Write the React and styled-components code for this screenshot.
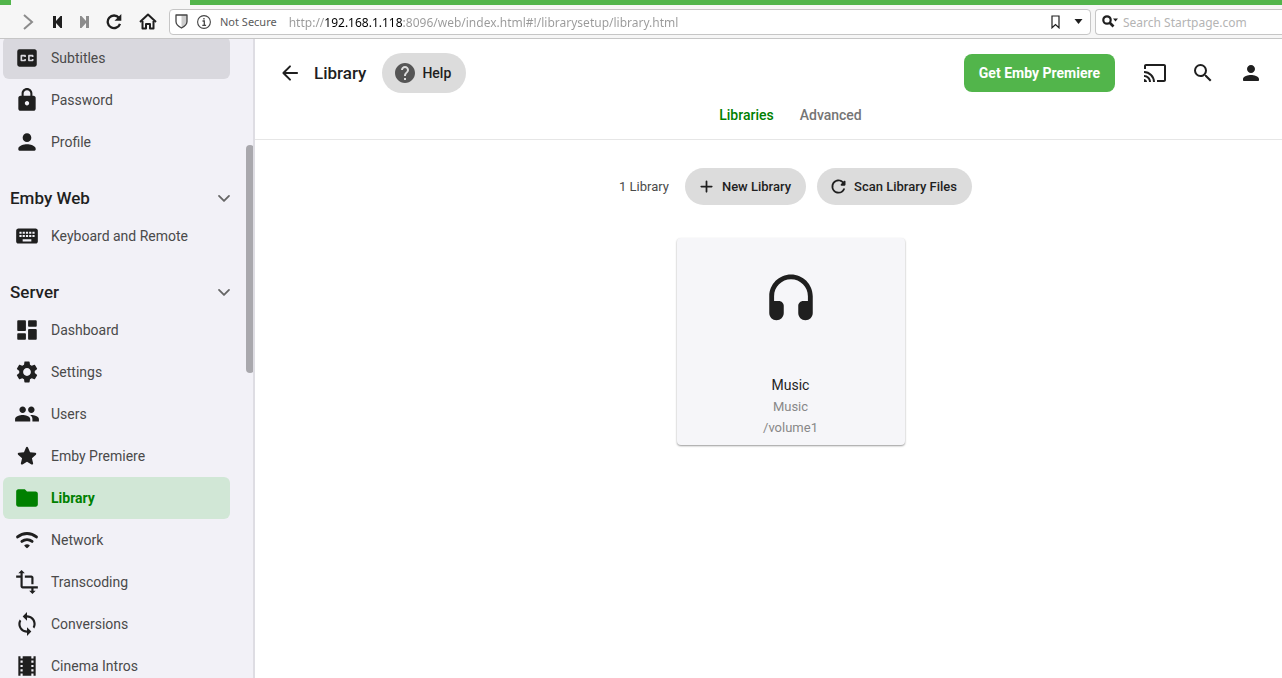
import React from 'react'
import styled, { createGlobalStyle } from 'styled-components'
import {
  MdCast,
  MdClosedCaption,
  MdFolder,
  MdHelp,
  MdKeyboard,
  MdLock,
  MdPeople,
  MdSearch,
  MdSettings,
  MdLoop,
  MdTheaters,
  MdTransform
} from 'react-icons/md'

const GlobalStyle = createGlobalStyle`
  :root {
    --mainFF: Roboto, 'Liberation Sans', sans-serif;
    --chromeFF: 'Noto Sans', 'Open Sans', sans-serif;
    --green: #52b54b;
    --activeGreen: #008000;
    --ink: #1f1f1f;
  }
  * {
    box-sizing: border-box;
  }
  body {
    margin: 0;
    background: #fff;
    color: var(--ink);
    font-family: var(--mainFF);
  }
  button, input {
    font-family: inherit;
    margin: 0;
  }
  ul {
    list-style: none;
    margin: 0;
    padding: 0;
  }
`

/* icons */

const Svg = ({ size = 24, children, ...rest }) => (
  <svg width={size} height={size} viewBox="0 0 24 24" fill="currentColor" aria-hidden="true" {...rest}>
    {children}
  </svg>
)

const BackIcon = () => (
  <Svg>
    <path d="M19 11H7.83l4.88-4.88c.39-.39.39-1.03 0-1.42a.996.996 0 0 0-1.41 0l-6.59 6.59a.996.996 0 0 0 0 1.41l6.59 6.59a.996.996 0 1 0 1.41-1.41L7.83 13H19c.55 0 1-.45 1-1s-.45-1-1-1z" />
  </Svg>
)

const DashboardIcon = ({ size }) => (
  <Svg size={size}>
    <path d="M4 13h6c.55 0 1-.45 1-1V4c0-.55-.45-1-1-1H4c-.55 0-1 .45-1 1v8c0 .55.45 1 1 1zm0 8h6c.55 0 1-.45 1-1v-4c0-.55-.45-1-1-1H4c-.55 0-1 .45-1 1v4c0 .55.45 1 1 1zm10 0h6c.55 0 1-.45 1-1v-8c0-.55-.45-1-1-1h-6c-.55 0-1 .45-1 1v8c0 .55.45 1 1 1zM13 4v4c0 .55.45 1 1 1h6c.55 0 1-.45 1-1V4c0-.55-.45-1-1-1h-6c-.55 0-1 .45-1 1z" />
  </Svg>
)

const PersonIcon = ({ size }) => (
  <Svg size={size}>
    <path d="M12 12c2.21 0 4-1.79 4-4s-1.79-4-4-4-4 1.79-4 4 1.79 4 4 4zm0 2c-2.67 0-8 1.34-8 4v1c0 .55.45 1 1 1h14c.55 0 1-.45 1-1v-1c0-2.66-5.33-4-8-4z" />
  </Svg>
)

const StarIcon = ({ size }) => (
  <Svg size={size}>
    <path d="M12 17.27l4.15 2.51c.76.46 1.69-.22 1.49-1.08l-1.1-4.72 3.67-3.18c.67-.58.31-1.68-.57-1.75l-4.83-.41-1.89-4.46c-.34-.81-1.5-.81-1.84 0L9.19 8.63l-4.83.41c-.88.07-1.24 1.17-.57 1.75l3.67 3.18-1.1 4.72c-.2.86.73 1.54 1.49 1.08l4.15-2.5z" />
  </Svg>
)

const WifiIcon = ({ size }) => (
  <Svg size={size}>
    <g fill="none" stroke="currentColor" strokeWidth="2.7" strokeLinecap="round">
      <path d="M3.300 9.200c5-4.300 12.400-4.300 17.400 0" />
      <path d="M7.300 13.300c2.800-2.200 6.600-2.200 9.400 0" />
    </g>
    <path d="M9.800 16.500c1.400-.8 3-.8 4.400 0 .4.300.4.700.1 1l-1.600 1.700c-.4.4-1 .4-1.400 0l-1.600-1.700c-.3-.3-.3-.7.1-1z" />
  </Svg>
)

const AddIcon = () => (
  <Svg size={21}>
    <path d="M18 13h-5v5c0 .55-.45 1-1 1s-1-.45-1-1v-5H6c-.55 0-1-.45-1-1s.45-1 1-1h5V6c0-.55.45-1 1-1s1 .45 1 1v5h5c.55 0 1 .45 1 1s-.45 1-1 1z" />
  </Svg>
)

const refreshPath =
  'M17.65 6.35a7.95 7.95 0 0 0-6.48-2.31c-3.67.37-6.69 3.35-7.1 7.02C3.52 15.91 7.27 20 12 20a7.98 7.98 0 0 0 7.21-4.56c.32-.67-.16-1.44-.9-1.44-.37 0-.72.2-.88.53a5.994 5.994 0 0 1-6.8 3.31c-2.22-.49-4.01-2.3-4.48-4.52A6.002 6.002 0 0 1 12 6c1.66 0 3.14.69 4.22 1.78l-1.51 1.51c-.63.63-.19 1.71.7 1.71H19c.55 0 1-.45 1-1V6.41c0-.89-1.08-1.34-1.71-.71l-.64.65z'

const RefreshIcon = () => (
  <Svg size={21}>
    <path d={refreshPath} />
  </Svg>
)

const ChevronIcon = () => (
  <Svg size={20} fill="none" stroke="#666" strokeWidth="2.2" strokeLinecap="round" strokeLinejoin="round">
    <path d="M6 9.500l6 6 6-6" />
  </Svg>
)

const HeadsetIcon = () => (
  <Svg size={58}>
    <path d="M12 1c-4.970 0-9 4.030-9 9v7c0 1.660 1.340 3 3 3s3-1.340 3-3v-3c0-1.100-.9-2-2-2H5v-2c0-3.870 3.130-7 7-7s7 3.130 7 7v2h-2c-1.100 0-2 .9-2 2v3c0 1.660 1.340 3 3 3s3-1.340 3-3v-7c0-4.970-4.030-9-9-9z" />
  </Svg>
)

const ForwardIcon = () => (
  <svg width="12" height="18" viewBox="0 0 12 18" fill="none" stroke="#8c8c8c" strokeWidth="2" aria-hidden="true">
    <path d="M2 2l8 7-8 7" />
  </svg>
)

const RewindIcon = () => (
  <svg width="10" height="12" viewBox="0 0 10 12" fill="currentColor" aria-hidden="true">
    <path d="M0 0h3v5l4.500-5H9v12H7.500L3 7v5H0z" />
  </svg>
)

const FastForwardIcon = () => (
  <svg width="10" height="12" viewBox="0 0 10 12" fill="#8c8c8c" aria-hidden="true">
    <path d="M9 0H6v5L1.500 0H0v12h1.500L6 7v5h3z" />
  </svg>
)

const ReloadIcon = () => (
  <svg width="16" height="16" viewBox="0 0 16 16" aria-hidden="true">
    <path d="M12.900 3.800A6.300 6.300 0 1 0 14 9.800" fill="none" stroke="currentColor" strokeWidth="2.300" />
    <path d="M15.300 0v6.800H8.500z" fill="currentColor" />
  </svg>
)

const HomeIcon = () => (
  <svg width="18" height="17" viewBox="0 0 18 17" fill="none" stroke="currentColor" strokeWidth="2" strokeLinejoin="round" aria-hidden="true">
    <path d="M1 9l8-7.500L17 9" />
    <path d="M3.500 8v7.500H7V11h4v4.500h3.500V8" />
  </svg>
)

const ShieldIcon = () => (
  <svg width="13" height="15" viewBox="0 0 13 15" aria-hidden="true">
    <path d="M6.500 1H12v6.500c0 3-2.500 5-5.500 6.500z" fill="#ccc" />
    <path d="M1 1h11v6.500c0 3-2.500 5-5.500 6.500C3.500 12.500 1 10.500 1 7.500z" fill="none" stroke="#444" strokeWidth="1.300" strokeLinejoin="round" />
  </svg>
)

const InfoIcon = () => (
  <svg width="14" height="14" viewBox="0 0 14 14" fill="none" stroke="#444" aria-hidden="true">
    <circle cx="7" cy="7" r="6.400" strokeWidth="1.100" />
    <path d="M5.500 6H7.300v4.300M5.300 10.300h3.800" strokeWidth="1.300" />
    <path d="M6.300 3.700h1.300" strokeWidth="1.500" />
  </svg>
)

const BookmarkIcon = () => (
  <svg width="9" height="14" viewBox="0 0 9 14" fill="none" stroke="currentColor" strokeWidth="1.200" aria-hidden="true">
    <path d="M1 1h7v11.800L4.500 9.500 1 12.800z" />
  </svg>
)

const CaretIcon = () => (
  <svg width="9" height="5" viewBox="0 0 8 5" fill="currentColor" aria-hidden="true">
    <path d="M0 0h8L4 5z" />
  </svg>
)

const SearchEngineIcon = () => (
  <svg width="16" height="13" viewBox="0 0 16 13" aria-hidden="true">
    <circle cx="5" cy="5" r="3.700" fill="none" stroke="currentColor" strokeWidth="2.200" />
    <path d="M7.500 7.500l4 4" stroke="currentColor" strokeWidth="2.600" />
    <path d="M11 3.500h5L13.500 6.500z" fill="currentColor" />
  </svg>
)

/* browser chrome */

const Page = styled.div`
  display: flex;
  flex-direction: column;
  height: 100vh;
  overflow: hidden;
`

const TabStrip = styled.div`
  height: 5px;
  flex: none;
  padding-left: 11px;
  background: var(--green);

  span {
    display: block;
    width: 179px;
    height: 5px;
    background: #f6f6f6;
  }
`

const Toolbar = styled.div`
  display: flex;
  flex: none;
  align-items: center;
  height: 34px;
  background: #f6f6f6;
  border-bottom: 1px solid #c6c6c6;
  font-family: var(--chromeFF);
`

const ToolButtons = styled.div`
  display: flex;
  width: 169px;
  flex: none;
  padding-left: 14px;
`

const ToolButton = styled.button`
  display: flex;
  align-items: center;
  justify-content: center;
  width: ${props => props.$width || 28}px;
  height: 30px;
  padding: 0;
  border: 0;
  background: none;
  color: #1f1f1f;
`

const Field = styled.div`
  display: flex;
  align-items: center;
  height: 26px;
  background: #fff;
  border: 1px solid #c6c6c6;
  border-radius: 4px;
`

const AddressField = styled(Field)`
  flex: 1;
  padding-left: 5px;
`

const SearchField = styled(Field)`
  width: 187px;
  flex: none;
  margin-left: 4px;
  border-right: 0;
  border-top-right-radius: 0;
  border-bottom-right-radius: 0;
`

const Security = styled.label`
  display: flex;
  align-items: center;
  gap: 9px;
  margin-right: 12px;
  color: #5a5a5a;
  font-size: 11px;
  white-space: nowrap;
`

/* the host part of the address is darker than the rest */
const Address = styled.input`
  flex: 1;
  min-width: 0;
  padding: 2px 0 0;
  border: 0;
  outline: 0;
  font-size: 12px;
  color: transparent;
  background: linear-gradient(to right, #999 36px, #000 36px, #000 114px, #999 114px);
  background-clip: text;
  -webkit-background-clip: text;
`

const SearchInput = styled.input`
  flex: 1;
  min-width: 0;
  padding: 2px 0 0;
  border: 0;
  outline: 0;
  background: none;
  font-size: 12px;

  &::placeholder {
    color: #b4b4b4;
  }
`

/* sidebar */

const Body = styled.div`
  display: flex;
  flex: 1;
  min-height: 0;
`

const Sidebar = styled.nav`
  position: relative;
  width: 255px;
  flex: none;
  overflow: hidden;
  background: #f2f1f7;
  border-right: 2px solid #dedde3;
`

const SidebarContent = styled.div`
  margin-top: -2px;
  padding: 0 23px 0 3px;
`

const ScrollThumb = styled.div`
  position: absolute;
  top: 106px;
  right: -1px;
  width: 8px;
  height: 228px;
  border-radius: 4px;
  background: #a9a8ad;
`

const SectionHeader = styled.button`
  display: flex;
  align-items: center;
  justify-content: space-between;
  width: 100%;
  height: 34px;
  margin-top: 18px;
  padding: 0 0 0 7px;
  border: 0;
  background: none;
  color: var(--ink);
  font-size: 17px;
  font-weight: 500;

  svg {
    margin-right: -4px;
  }
`

const NavLink = styled.a`
  display: flex;
  align-items: center;
  gap: 11px;
  height: 42px;
  padding-left: 11px;
  border-radius: 6px;
  background: ${props => (props.$active ? '#d1e7d6' : props.$focused ? '#d9d8de' : 'none')};
  color: ${props => (props.$active ? 'var(--activeGreen)' : '#4a4a4a')};
  font-size: 14px;
  font-weight: ${props => (props.$active ? 700 : 400)};
  text-decoration: none;

  svg {
    flex: none;
    color: ${props => (props.$active ? 'var(--activeGreen)' : 'var(--ink)')};
  }
`

/* main area */

const Main = styled.main`
  flex: 1;
  min-width: 0;
`

const Header = styled.header`
  height: 101px;
  border-bottom: 1px solid #e6e6e6;
`

const HeaderRow = styled.div`
  display: flex;
  align-items: center;
  height: 68px;
  padding: 0 7px 0 18px;
`

const IconButton = styled.button`
  display: flex;
  align-items: center;
  justify-content: center;
  width: ${props => props.$width || 48}px;
  height: 40px;
  padding: 0;
  border: 0;
  background: none;
  color: var(--ink);
`

const Title = styled.h1`
  margin: 0 16px 0 7px;
  font-size: 17px;
  font-weight: 500;
`

const PillButton = styled.button`
  display: flex;
  align-items: center;
  gap: 5px;
  height: ${props => (props.$large ? 40 : 37)}px;
  padding: ${props => (props.$large ? '0 15px 0 11px' : '0 15px 0 11px')};
  border: 0;
  border-radius: 20px;
  background: #dcdcdc;
  color: var(--ink);
  font-size: ${props => (props.$large ? 14 : 13)}px;
  font-weight: 500;
  white-space: nowrap;
`

const HelpIcon = styled(MdHelp)`
  color: #555;
`

const HeaderActions = styled.div`
  display: flex;
  align-items: center;
  margin-left: auto;
`

const PremiereButton = styled.button`
  height: 38px;
  margin-right: 16px;
  padding: 0 15px;
  border: 0;
  border-radius: 8px;
  background: var(--green);
  color: #fff;
  font-size: 14px;
  font-weight: 700;
`

const Tabs = styled.div`
  display: flex;
  justify-content: center;
  gap: 26px;
  padding-left: 44px;
`

const Tab = styled.button`
  padding: 0;
  border: 0;
  background: none;
  color: ${props => (props.$active ? 'var(--activeGreen)' : '#757575')};
  font-size: 14px;
  font-weight: 500;
  line-height: 16px;
`

const Content = styled.div`
  display: flex;
  flex-direction: column;
  align-items: center;
  gap: 33px;
  padding: 28px 0 0 44px;
`

const Actions = styled.div`
  display: flex;
  align-items: center;
  gap: 11px;
  padding-left: 10px;
`

const Count = styled.span`
  margin-right: 5px;
  color: #4a4a4a;
  font-size: 13px;
`

const Card = styled.a`
  display: flex;
  flex-direction: column;
  align-items: center;
  width: 228px;
  padding: 34px 12px 7px;
  border-radius: 4px;
  background: #f6f6f9;
  box-shadow: 0 1px 2px rgba(0, 0, 0, 0.4);
  color: #888;
  font-size: 13px;
  line-height: 21px;
  text-decoration: none;

  svg {
    color: var(--ink);
    margin-bottom: 45px;
  }
  .name {
    color: var(--ink);
    font-size: 14px;
  }
`

const userItems = [
  { label: 'Subtitles', icon: MdClosedCaption, focused: true },
  { label: 'Password', icon: MdLock },
  { label: 'Profile', icon: PersonIcon }
]

const webItems = [{ label: 'Keyboard and Remote', icon: MdKeyboard }]

const serverItems = [
  { label: 'Dashboard', icon: DashboardIcon },
  { label: 'Settings', icon: MdSettings },
  { label: 'Users', icon: MdPeople },
  { label: 'Emby Premiere', icon: StarIcon },
  { label: 'Library', icon: MdFolder, active: true },
  { label: 'Network', icon: WifiIcon },
  { label: 'Transcoding', icon: MdTransform },
  { label: 'Conversions', icon: MdLoop },
  { label: 'Cinema Intros', icon: MdTheaters }
]

const NavList = ({ items }) => (
  <ul>
    {items.map(({ label, icon: Icon, active, focused }) => (
      <li key={label}>
        <NavLink href="#" $active={active} $focused={focused}>
          <Icon size={26} />
          {label}
        </NavLink>
      </li>
    ))}
  </ul>
)

const BrowserBar = () => (
  <>
    <TabStrip><span /></TabStrip>
    <Toolbar>
      <ToolButtons>
        <ToolButton aria-label="Forward"><ForwardIcon /></ToolButton>
        <ToolButton aria-label="Rewind" $width={32}><RewindIcon /></ToolButton>
        <ToolButton aria-label="Fast forward" $width={22}><FastForwardIcon /></ToolButton>
        <ToolButton aria-label="Reload" $width={36}><ReloadIcon /></ToolButton>
        <ToolButton aria-label="Home" $width={32}><HomeIcon /></ToolButton>
      </ToolButtons>
      <AddressField>
        <Security htmlFor="address">
          <ShieldIcon />
          <InfoIcon />
          Not Secure
        </Security>
        <Address
          id="address"
          spellCheck={false}
          defaultValue="http://192.168.1.118:8096/web/index.html#!/librarysetup/library.html"
        />
        <ToolButton aria-label="Bookmark" $width={22}><BookmarkIcon /></ToolButton>
        <ToolButton aria-label="Address history" $width={24}><CaretIcon /></ToolButton>
      </AddressField>
      <SearchField>
        <ToolButton aria-label="Search engine" $width={27}><SearchEngineIcon /></ToolButton>
        <SearchInput aria-label="Search" placeholder="Search Startpage.com" />
      </SearchField>
    </Toolbar>
  </>
)

const App = () => (
  <Page>
    <GlobalStyle />
    <BrowserBar />
    <Body>
      <Sidebar>
        <SidebarContent>
          <NavList items={userItems} />
          <SectionHeader>Emby Web<ChevronIcon /></SectionHeader>
          <NavList items={webItems} />
          <SectionHeader>Server<ChevronIcon /></SectionHeader>
          <NavList items={serverItems} />
        </SidebarContent>
        <ScrollThumb />
      </Sidebar>
      <Main>
        <Header>
          <HeaderRow>
            <IconButton aria-label="Back" $width={34}><BackIcon /></IconButton>
            <Title>Library</Title>
            <PillButton $large><HelpIcon size={24} />Help</PillButton>
            <HeaderActions>
              <PremiereButton>Get Emby Premiere</PremiereButton>
              <IconButton aria-label="Cast"><MdCast size={24} /></IconButton>
              <IconButton aria-label="Search"><MdSearch size={24} /></IconButton>
              <IconButton aria-label="User"><PersonIcon size={24} /></IconButton>
            </HeaderActions>
          </HeaderRow>
          <Tabs>
            <Tab $active>Libraries</Tab>
            <Tab>Advanced</Tab>
          </Tabs>
        </Header>
        <Content>
          <Actions>
            <Count>1 Library</Count>
            <PillButton><AddIcon />New Library</PillButton>
            <PillButton><RefreshIcon />Scan Library Files</PillButton>
          </Actions>
          <Card href="#">
            <HeadsetIcon />
            <span className="name">Music</span>
            <span>Music</span>
            <span>/volume1</span>
          </Card>
        </Content>
      </Main>
    </Body>
  </Page>
)

export default App
